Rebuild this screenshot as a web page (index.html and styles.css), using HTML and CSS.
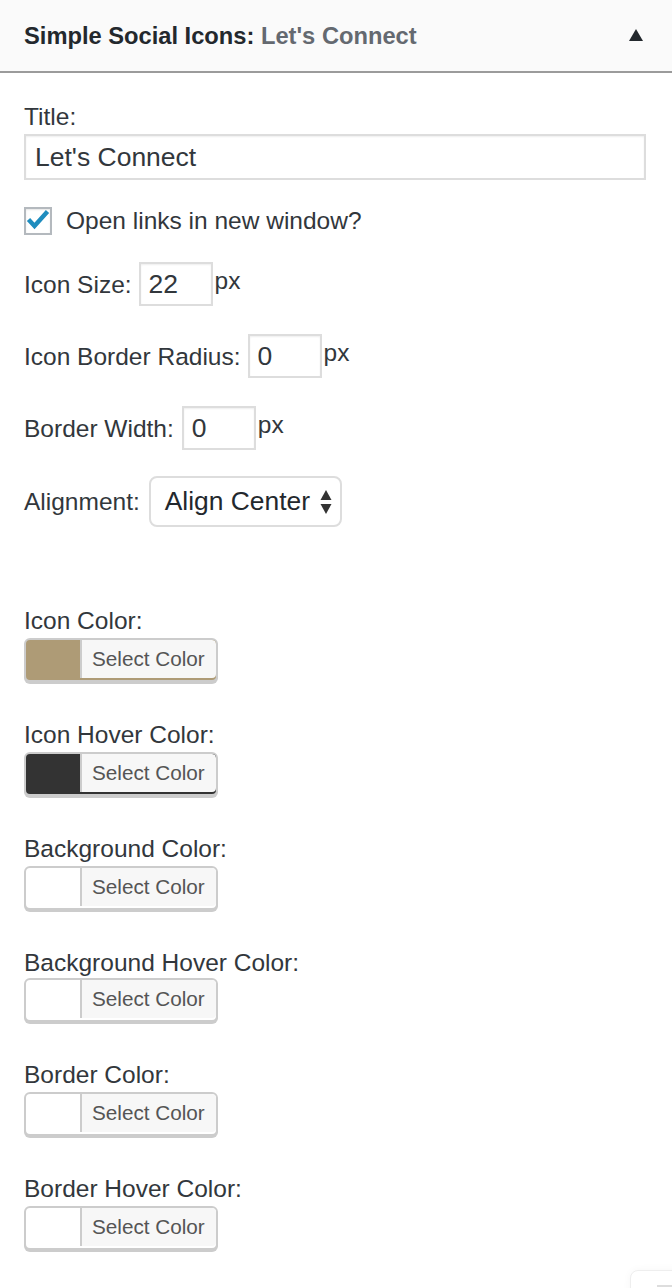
FILE: index.html
```html
<!DOCTYPE html>
<html lang="en">
<head>
<meta charset="utf-8">
<title>Simple Social Icons widget</title>
<link rel="stylesheet" href="styles.css">
</head>
<body>
<div class="widget">
  <div class="widget-top">
    <h3 class="widget-title">Simple Social Icons:<span class="in-title"> Let's Connect</span></h3>
    <svg class="toggle" width="14" height="12" viewBox="0 0 14 12" aria-hidden="true"><polygon points="7,0 14,12 0,12" fill="#23282d"/></svg>
  </div>
  <div class="widget-inside">
    <label class="field-label" for="title">Title:</label>
    <input class="text-input" id="title" type="text" value="Let's Connect">

    <div class="check-row">
      <span class="checkbox">
        <svg width="24" height="24" viewBox="0 0 24 24" aria-hidden="true"><polyline points="2.5,10.5 8.5,17 21.5,2.5" fill="none" stroke="#1e8cbe" stroke-width="4.4"/></svg>
      </span>
      <span class="check-label">Open links in new window?</span>
    </div>

    <div class="num-row first">
      <span class="row-label">Icon Size:</span>
      <input class="num-input tight" type="text" value="22">
      <span class="unit">px</span>
    </div>
    <div class="num-row">
      <span class="row-label">Icon Border Radius:</span>
      <input class="num-input tight" type="text" value="0">
      <span class="unit">px</span>
    </div>
    <div class="num-row">
      <span class="row-label">Border Width:</span>
      <input class="num-input" type="text" value="0">
      <span class="unit">px</span>
    </div>
    <div class="num-row align-row">
      <span class="row-label">Alignment:</span>
      <div class="select">
        <span>Align Center</span>
        <svg class="arrows" width="12" height="24" viewBox="0 0 12 24" aria-hidden="true"><polygon points="6,0 11.5,10 0.5,10" fill="#333"/><polygon points="0.5,14 11.5,14 6,24" fill="#333"/></svg>
      </div>
    </div>

    <div class="colors">
      <div class="color-group">
        <span class="field-label">Icon Color:</span>
        <span class="color-btn swatch-tan"><span class="color-text">Select Color</span></span>
      </div>
      <div class="color-group">
        <span class="field-label">Icon Hover Color:</span>
        <span class="color-btn swatch-dark"><span class="color-text">Select Color</span></span>
      </div>
      <div class="color-group">
        <span class="field-label">Background Color:</span>
        <span class="color-btn"><span class="color-text">Select Color</span></span>
      </div>
      <div class="color-group compact">
        <span class="field-label">Background Hover Color:</span>
        <span class="color-btn"><span class="color-text">Select Color</span></span>
      </div>
      <div class="color-group">
        <span class="field-label">Border Color:</span>
        <span class="color-btn"><span class="color-text">Select Color</span></span>
      </div>
      <div class="color-group">
        <span class="field-label">Border Hover Color:</span>
        <span class="color-btn"><span class="color-text">Select Color</span></span>
      </div>
    </div>
  </div>
</div>
<div class="corner-card"><span class="corner-bar"></span></div>
</body>
</html>
```
FILE: styles.css
```css
html, body {
  margin: 0;
  padding: 0;
  height: 1288px;
  overflow: hidden;
}

body {
  position: relative;
  background: #ffffff;
  font-family: "Liberation Sans", Arial, sans-serif;
  color: #32373c;
}

.widget-top {
  height: 71px;
  background: #fafafa;
  border-bottom: 2px solid #9b9b9b;
  display: flex;
  align-items: center;
  justify-content: space-between;
  padding: 0 29px 0 24px;
}

.widget-title {
  margin: 0;
  font-size: 23.7px;
  font-weight: bold;
  color: #23282d;
  line-height: 30px;
}

.in-title {
  color: #646970;
}

.toggle {
  display: block;
  margin-top: -2px;
}

.widget-inside {
  padding: 29px 26px 0 24px;
}

.field-label {
  display: block;
  font-size: 24.5px;
  line-height: 30px;
  margin-bottom: 2px;
}

.text-input {
  display: block;
  box-sizing: border-box;
  width: 100%;
  height: 46px;
  margin: 0;
  border: 2px solid #dddddd;
  border-radius: 0;
  padding: 0 9px;
  font-family: "Liberation Sans", Arial, sans-serif;
  font-size: 26.5px;
  color: #32373c;
  background: #fff;
  box-shadow: inset 0 1px 2px rgba(0, 0, 0, 0.07);
  outline: none;
}

.check-row {
  margin-top: 27px;
  display: flex;
  align-items: center;
  gap: 14px;
  height: 28px;
}

.checkbox {
  box-sizing: border-box;
  width: 28px;
  height: 28px;
  border: 2px solid #b4b9be;
  background: #fff;
  box-shadow: inset 0 1px 2px rgba(0, 0, 0, 0.1);
  display: flex;
  align-items: center;
  justify-content: center;
}

.checkbox svg {
  display: block;
}

.check-label {
  font-size: 24.5px;
  line-height: 30px;
}

.num-row {
  display: flex;
  align-items: baseline;
  margin-top: 28px;
}

.num-row.first {
  margin-top: 27px;
}

.num-row.align-row {
  margin-top: 26px;
}

.row-label {
  font-size: 24.5px;
  line-height: 30px;
}

.num-input {
  box-sizing: border-box;
  width: 74px;
  height: 44px;
  margin: 0 2px 0 8px;
  border: 2px solid #dddddd;
  border-radius: 0;
  padding: 0 8px;
  font-family: "Liberation Sans", Arial, sans-serif;
  font-size: 26.5px;
  color: #32373c;
  background: #fff;
  box-shadow: inset 0 1px 2px rgba(0, 0, 0, 0.07);
  outline: none;
}

.num-input.tight {
  margin-left: 7px;
}

.unit {
  align-self: flex-start;
  margin-top: 4px;
  font-size: 24.5px;
  line-height: 30px;
}

.select {
  box-sizing: border-box;
  width: 193px;
  height: 51px;
  margin-left: 9px;
  border: 2px solid #dddddd;
  border-radius: 8px;
  padding: 0 8px 0 14px;
  display: flex;
  align-items: center;
  justify-content: space-between;
  font-size: 26.4px;
  color: #23282d;
  background: #fff;
}

.arrows {
  display: block;
}

.colors {
  margin-top: 79px;
}

.color-group {
  margin-bottom: 38px;
}

.color-group.compact .field-label {
  margin-bottom: 0;
}

.color-btn {
  box-sizing: border-box;
  display: inline-flex;
  align-items: flex-start;
  height: 44px;
  border: 2px solid #cccccc;
  border-radius: 6px;
  box-shadow: 0 2px 0 #cccccc;
  padding-left: 54px;
  background: #ffffff;
  overflow: hidden;
}

.swatch-tan {
  background: #ae9b76;
}

.swatch-dark {
  background: #333333;
}

.color-text {
  height: 38px;
  border-left: 2px solid #cccccc;
  border-radius: 0 4px 4px 0;
  background: #f7f7f7;
  padding: 0 11px 0 10px;
  font-size: 20.7px;
  line-height: 38px;
  color: #555555;
}

.corner-card {
  position: absolute;
  left: 630px;
  top: 1270px;
  width: 70px;
  height: 40px;
  border: 1px solid #eeeeee;
  border-radius: 8px;
  background: #ffffff;
  box-shadow: 0 0 8px rgba(0, 0, 0, 0.04);
}

.corner-bar {
  position: absolute;
  left: 26px;
  top: 14px;
  width: 30px;
  height: 2px;
  background: #dddddd;
}
```
